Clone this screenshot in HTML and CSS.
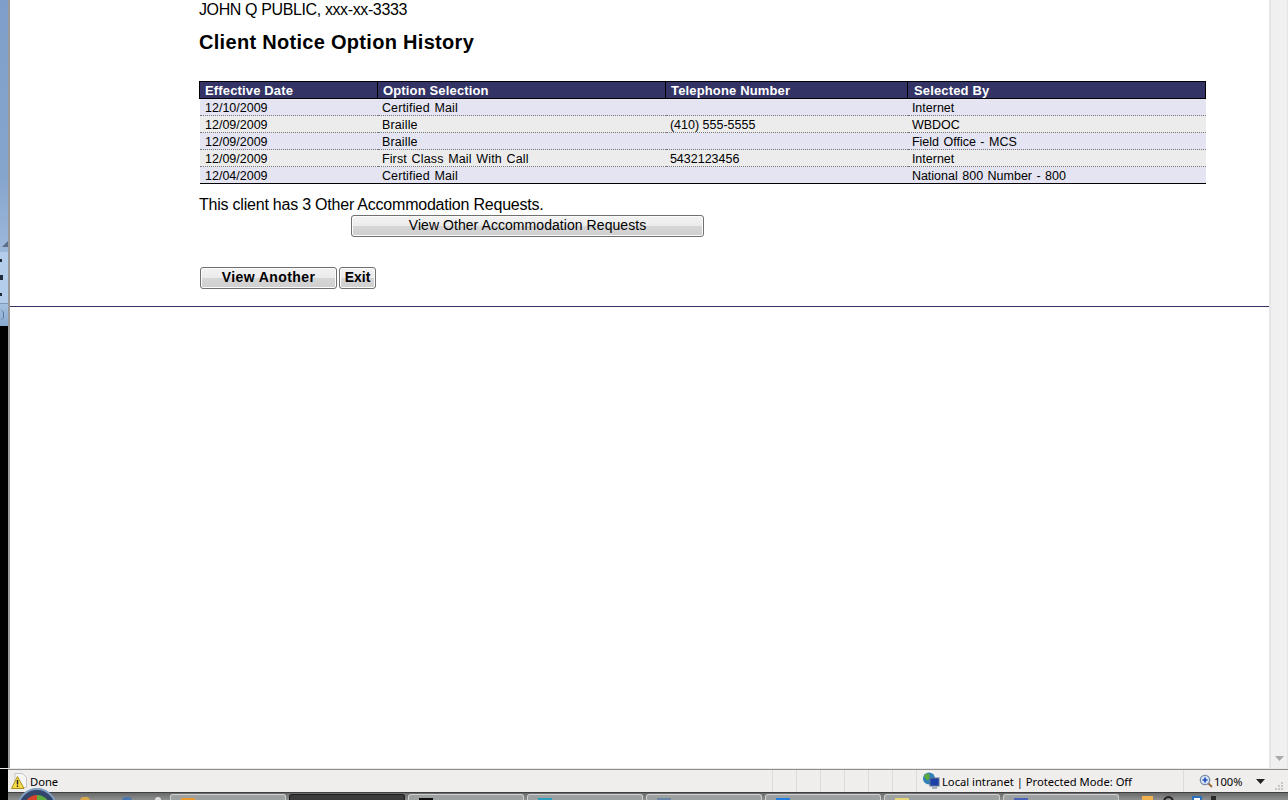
FILE: index.html
```html
<!DOCTYPE html>
<html lang="en">
<head>
<meta charset="utf-8">
<title>Client Notice Option History</title>
<link rel="stylesheet" href="styles.css">
</head>
<body>
<div class="window">
  <div class="viewport">
    <aside class="side-strip">
      <div class="strip-top"><span class="strip-arrow"></span></div>
      <div class="strip-dots"><i></i><i class="dot-wide"></i><i></i></div>
      <div class="strip-foot"><span class="strip-ring"></span></div>
    </aside>
    <main class="page">
      <div class="content">
        <p class="client">JOHN Q PUBLIC, xxx-xx-3333</p>
        <h1 class="title">Client Notice Option History</h1>
        <table class="history">
          <colgroup><col class="c1"><col class="c2"><col class="c3"><col class="c4"></colgroup>
          <thead>
            <tr><th>Effective Date</th><th>Option Selection</th><th>Telephone Number</th><th>Selected By</th></tr>
          </thead>
          <tbody>
            <tr><td>12/10/2009</td><td>Certified Mail</td><td></td><td>Internet</td></tr>
            <tr><td>12/09/2009</td><td>Braille</td><td>(410) 555-5555</td><td>WBDOC</td></tr>
            <tr><td>12/09/2009</td><td>Braille</td><td></td><td>Field Office - MCS</td></tr>
            <tr><td>12/09/2009</td><td>First Class Mail With Call</td><td>5432123456</td><td>Internet</td></tr>
            <tr><td>12/04/2009</td><td>Certified Mail</td><td></td><td>National 800 Number - 800</td></tr>
          </tbody>
        </table>
        <p class="note">This client has 3 Other Accommodation Requests.</p>
        <div class="other-row"><button class="btn btn-other" type="button">View Other Accommodation Requests</button></div>
        <div class="actions">
          <button class="btn btn-bold btn-another" type="button">View Another</button>
          <button class="btn btn-bold btn-exit" type="button">Exit</button>
        </div>
      </div>
      <hr class="rule">
    </main>
    <div class="scrollbar">
      <svg class="scroll-arrow" width="9" height="5" viewBox="0 0 9 5"><path d="M0 0h9L4.500 5z" fill="#a9a9a9"/></svg>
    </div>
  </div>
  <footer class="statusbar">
    <svg class="warn" width="16" height="16" viewBox="0 0 16 16">
      <path d="M4 0.500h7.500l4 4v10H4z" fill="#f6f6f6" stroke="#c4c4c4"/>
      <path d="M6.500 3.500L13 15.500H0.500z" fill="#f7dc45" stroke="#a98f20"/>
      <path d="M5.800 7h1.400v4.500H5.800zM5.800 12.500h1.400v1.500H5.800z" fill="#222"/>
    </svg>
    <span class="status-text">Done</span>
    <span class="cells"><i></i><i></i><i></i><i></i><i></i><i></i></span>
    <span class="zone">
      <svg width="19" height="18" viewBox="0 0 19 18">
        <circle cx="7" cy="6.500" r="6" fill="#2f7fb8"/>
        <path d="M3 2.500c2-1.500 4-1 5 0-1 1.500-1 2 0 3-1 2-2 3-3 3-1-2-3-3-3-4z" fill="#5aa83e"/>
        <rect x="8" y="6" width="9" height="8" fill="#1c3fa8" stroke="#5c7590"/>
        <path d="M10 15h5v2h-5z" fill="#a6adc0"/>
      </svg>
      <span>Local intranet | Protected Mode: Off</span>
    </span>
    <span class="zoom">
      <svg width="14" height="14" viewBox="0 0 14 14">
        <circle cx="6" cy="6" r="4.700" fill="#d8e6f7" stroke="#7a8ba3" stroke-width="1.300"/>
        <path d="M9.500 9.500L13 13" stroke="#9a6a3c" stroke-width="2"/>
        <path d="M3.500 6h5M6 3.500v5" stroke="#1d48b5" stroke-width="1.600"/>
      </svg>
      <span>100%</span>
    </span>
    <svg class="zoom-caret" width="9" height="5" viewBox="0 0 9 5"><path d="M0 0h9L4.500 5z" fill="#222"/></svg>
    <svg class="grip" width="11" height="11" viewBox="0 0 11 11"><path d="M8 1h2v2H8zM5 4h2v2H5zM8 4h2v2H8zM2 7h2v2H2zM5 7h2v2H5zM8 7h2v2H8z" fill="#c8c6c4"/></svg>
  </footer>
  <nav class="taskbar">
    <span class="start-gap"></span>
    <span class="orb"><span class="orb-in"></span></span>
    <span class="quick"><i class="q1"></i><i class="q2"></i><i class="q3"></i></span>
    <span class="task"><i class="tag orange"></i></span>
    <span class="task task-active"></span>
    <span class="task"><i class="tag black"></i></span>
    <span class="task"><i class="tag teal"></i></span>
    <span class="task"><i class="tag slate"></i></span>
    <span class="task"><i class="tag blue"></i></span>
    <span class="task"><i class="tag yellow"></i></span>
    <span class="task"><i class="tag indigo"></i></span>
    <span class="tray"><i class="t1"></i><i class="t2"></i><i class="t3"></i><i class="t4"></i></span>
  </nav>
</div>
</body>
</html>
```

FILE: styles.css
```css
* { box-sizing: border-box; }
html, body { margin: 0; height: 100%; overflow: hidden; }
body { font-family: "Liberation Sans", Arial, sans-serif; color: #000; background: #fff; }

.window { display: flex; flex-direction: column; width: 1288px; height: 800px; overflow: hidden; background: #000; }
.viewport { display: flex; height: 769px; flex: none; border-bottom: 1px solid #e8e8e8; background: #fff; }

.side-strip { width: 10px; flex: none; display: flex; flex-direction: column; border-right: 2px solid #9a9a9a; background: #a9c3e3; }
.strip-top { height: 252px; background: linear-gradient(180deg, #7f9fca, #86a5cd 70%, #9db8d9); position: relative; }
.strip-arrow { position: absolute; right: 0; bottom: 5px; border: 3px solid transparent; border-right-color: #5c6f88; border-bottom-color: #5c6f88; }
.strip-dots { height: 51px; display: flex; flex-direction: column; gap: 13px; padding-top: 7px; background: #b4cdeb; }
.strip-dots i { display: block; width: 2px; height: 3px; background: #1f2a3a; }
.strip-dots .dot-wide { width: 3px; height: 5px; }
.strip-foot { height: 23px; padding-top: 6px; background: linear-gradient(180deg, #a5c1e2, #89a9d0); border-top: 1px solid #7d98bb; }
.strip-ring { display: block; width: 4px; height: 10px; border-right: 1px solid #5f7896; border-radius: 0 6px 6px 0; }
.side-strip::after { content: ""; flex: 1; background: #000; }

.page { flex: 1; min-width: 0; background: #fff; }
.content { padding-left: 189px; width: 1196px; }
.client { margin: 0; padding-top: 1px; font-size: 16px; line-height: 18px; letter-spacing: -0.380px; }
.title { margin: 12px 0 0; font-size: 20px; line-height: 23px; font-weight: bold; letter-spacing: 0.300px; }

.history { margin-top: 27px; width: 1006px; border-collapse: collapse; table-layout: fixed; font-size: 12.500px; }
.c1 { width: 178px; }
.c2 { width: 288px; }
.c3 { width: 242px; }
.c4 { width: 298px; }
.history th { height: 17px; padding: 1px 5px 0; background: #333366; color: #fff; text-align: left; font-size: 13px; line-height: 15px; font-weight: bold; letter-spacing: 0.150px; border: 1px solid #000; }
.history th:nth-child(4) { padding-left: 6px; }
.history td { height: 17px; padding: 2.500px 4px 0 4.400px; line-height: 13.500px; background: #e4e4f2; border-bottom: 1px dotted #777; white-space: nowrap; }
.history td:first-child { padding-left: 5.500px; }
.history td:nth-child(2) { letter-spacing: 0.150px; word-spacing: 1px; }
.history td:nth-child(4) { word-spacing: 1px; }
.history tbody tr:nth-child(even) td { background: #ececec; }
.history tbody tr:last-child td { height: 16px; border-bottom: 1px solid #000; }

.note { margin: 12px 0 0; font-size: 16px; line-height: 18px; letter-spacing: -0.220px; }
.other-row { padding-left: 152px; margin-top: 1px; }

.btn { display: block; height: 22px; padding: 0 0 2px; border: 1px solid #707070; border-radius: 3px; color: #000; font-family: "Liberation Sans", Arial, sans-serif; background: linear-gradient(180deg, #f3f3f3 0%, #ebebeb 48%, #d6d6d6 52%, #cfcfcf 100%); box-shadow: inset 0 0 0 1px #fbfbfb; }
.btn-other { width: 353px; font-size: 14px; letter-spacing: 0.060px; }
.actions { display: flex; gap: 2px; margin-top: 30px; padding-left: 1px; }
.btn-bold { font-size: 14px; font-weight: bold; }
.btn-another { width: 137px; letter-spacing: 0.400px; }
.btn-exit { width: 37px; }

.rule { margin: 17px 0 0; border: 0; height: 1px; background: #333366; }

.scrollbar { width: 19px; flex: none; background: #f0f0f0; border-left: 2px solid #e6e6e6; border-right: 1px solid #e4e4e4; display: flex; flex-direction: column; justify-content: flex-end; align-items: center; padding-bottom: 7px; }

.statusbar { height: 23px; flex: none; display: flex; align-items: center; background: #f0eded; border-top: 1px solid #8e8e8e; margin-left: 8px; padding-left: 3px; font-size: 11.200px; font-family: "Noto Sans", "Open Sans", sans-serif; }
.warn { flex: none; }
.status-text { margin-left: 3px; }
.cells { display: flex; margin-left: auto; height: 100%; }
.cells i { width: 24px; border-left: 1px solid #dcdcdc; }
.zone { display: flex; align-items: center; gap: 1px; width: 267px; height: 100%; padding-left: 5px; border-left: 1px solid #dcdcdc; }
.zoom { display: flex; align-items: center; gap: 1px; width: 65px; height: 100%; padding-left: 15px; border-left: 1px solid #dcdcdc; }
.zoom-caret { flex: none; margin-left: 8px; }
.grip { flex: none; margin-left: 8px; margin-right: 4px; align-self: flex-end; }

.taskbar { height: 8px; flex: none; display: flex; gap: 3px; align-items: flex-start; padding-top: 1px; background: linear-gradient(180deg, #6a6a6a, #8d8f8f); border-top: 1px solid #3f3f3f; position: relative; }
.start-gap { position: absolute; left: 0; top: -1px; width: 8px; height: 9px; background: #000; }
.orb { position: absolute; left: 17px; top: -5px; width: 40px; height: 40px; border-radius: 50%; background: #33466b; border: 2px solid #7f9ec0; }
.orb-in { display: block; width: 26px; height: 26px; margin: 5px; border-radius: 50%; background: linear-gradient(90deg, #d8432c 50%, #5fae3e 50%); }
.quick { position: absolute; left: 80px; top: 4px; display: flex; }
.quick i { display: block; height: 8px; border-radius: 4px 4px 0 0; }
.q1 { width: 10px; background: #d9a84a; }
.q2 { width: 10px; margin-left: 32px; background: #4a78b0; }
.q3 { width: 6px; margin-left: 23px; background: #ddd; }
.task { flex: none; width: 116px; height: 8px; overflow: hidden; border: 1px solid #cfcfcf; border-bottom: 0; border-radius: 3px 3px 0 0; background: #9ea1a1; padding: 3px 0 0 10px; }
.task:nth-of-type(4) { margin-left: 170px; }
.task-active { background: #3b3b3b; border-color: #1d1d1d; }
.tag { display: block; width: 14px; height: 10px; }
.orange { background: #e89a2c; }
.black { background: #111; }
.teal { background: #2c9fc0; }
.slate { background: #6e87a8; }
.blue { background: #1f7fe0; }
.yellow { background: #e8d77a; }
.indigo { background: #4a63b8; }
.tray { display: flex; margin-left: 20px; padding-top: 2px; }
.tray i { display: block; height: 12px; }
.t1 { width: 11px; background: #efb24e; }
.t2 { width: 11px; margin-left: 10px; border: 2px solid #222; border-radius: 50%; }
.t3 { width: 10px; margin-left: 18px; background: #fff; border: 2px solid #2a6fc0; }
.t4 { width: 5px; margin-left: 9px; background: #2a2a2a; }
```
